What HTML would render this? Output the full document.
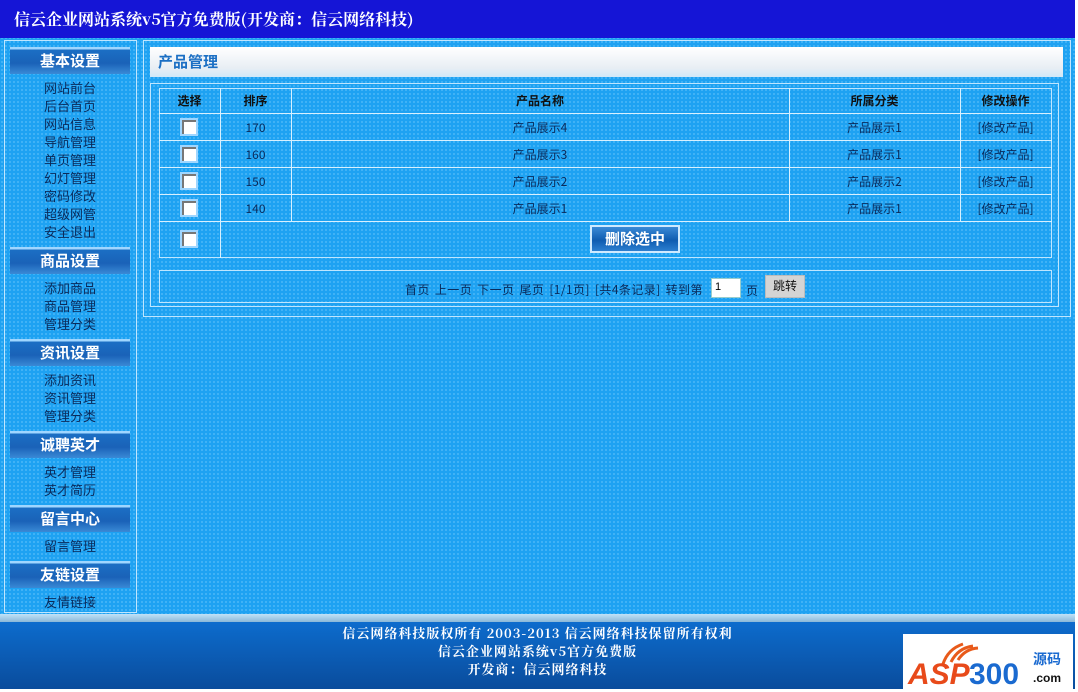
<!DOCTYPE html>
<html><head><meta charset="utf-8"><style>
*{margin:0;padding:0;box-sizing:border-box}
body{width:1078px;height:689px;overflow:hidden;background:#fff;position:relative;font-family:"Liberation Sans","SimSun","Noto Sans CJK SC",sans-serif;font-size:12px;color:#0a2a5a}
.bg{position:absolute;left:0;top:0;width:1075px;height:689px;background:#1ea2f2;background-image:radial-gradient(circle,#6cc6fa 0.6px,transparent 0.9px);background-size:4px 4px}
.hdr{position:absolute;left:0;top:0;width:1075px;height:38px;background:#1515d6;color:#fff;font:bold 16px "Noto Serif CJK SC","Noto Sans CJK SC",serif;line-height:38px;padding-left:14px;letter-spacing:0}
.box{position:absolute;border:1px solid #bfe6ff}
.sh{position:absolute;left:10px;width:120px;height:27px;background:linear-gradient(180deg,#9fd6ff 0,#9fd6ff 2px,#1b6fc4 3px,#1a62b8 60%,#3a8ad6 100%);color:#fff;font:bold 15px "Noto Sans CJK SC",sans-serif;text-align:center;line-height:27px}
.it{position:absolute;left:0;width:140px;text-align:center;font:13px "Noto Sans CJK SC",sans-serif;color:#0a2a5a;line-height:18px}
.title{position:absolute;left:150px;top:47px;width:913px;height:30px;background:linear-gradient(180deg,#fff,#e8eef4 70%,#cfe8f8);font:bold 15px "Noto Sans CJK SC",sans-serif;color:#1b6fc4;line-height:30px;padding-left:8px}
.l{position:absolute;background:#d8f0ff}
.t{position:absolute;text-align:center;font:12px "Noto Sans CJK SC",sans-serif;color:#0a2a5a}
.th{font-weight:bold;color:#111}
.cb{position:absolute;left:180px;width:18px;height:18px;border:2px solid #9fd6ff;background:#fff;box-shadow:inset 2px 2px 0 #777}
.ft{position:absolute;left:0;top:622px;width:1075px;height:67px;background:linear-gradient(180deg,#0d6ccd,#0a4c9c);color:#fff;font:bold 13px "Noto Serif CJK SC","Noto Sans CJK SC",serif;text-align:center;line-height:18px;padding-top:2px;letter-spacing:1px}
</style></head><body>
<div class="bg"></div>
<div class="hdr">信云企业网站系统v5官方免费版(开发商：信云网络科技)</div>

<div class="box" style="left:4px;top:40px;width:133px;height:573px"></div>
<div class="sh" style="top:47px">基本设置</div>
<div class="it" style="top:79px">网站前台<br>后台首页<br>网站信息<br>导航管理<br>单页管理<br>幻灯管理<br>密码修改<br>超级网管<br>安全退出</div>
<div class="sh" style="top:247px">商品设置</div>
<div class="it" style="top:279px">添加商品<br>商品管理<br>管理分类</div>
<div class="sh" style="top:339px">资讯设置</div>
<div class="it" style="top:371px">添加资讯<br>资讯管理<br>管理分类</div>
<div class="sh" style="top:431px">诚聘英才</div>
<div class="it" style="top:463px">英才管理<br>英才简历</div>
<div class="sh" style="top:505px">留言中心</div>
<div class="it" style="top:537px">留言管理</div>
<div class="sh" style="top:561px">友链设置</div>
<div class="it" style="top:593px">友情链接</div>

<div class="box" style="left:143px;top:40px;width:928px;height:277px"></div>
<div class="title">产品管理</div>
<div class="box" style="left:150px;top:83px;width:909px;height:224px"></div>
<div class="box" style="left:159px;top:88px;width:893px;height:170px"></div>
<div class="l" style="left:159px;top:113px;width:893px;height:1px"></div>
<div class="l" style="left:159px;top:140px;width:893px;height:1px"></div>
<div class="l" style="left:159px;top:167px;width:893px;height:1px"></div>
<div class="l" style="left:159px;top:194px;width:893px;height:1px"></div>
<div class="l" style="left:159px;top:221px;width:893px;height:1px"></div>
<div class="l" style="left:220px;top:88px;width:1px;height:170px"></div>
<div class="l" style="left:291px;top:88px;width:1px;height:133px"></div>
<div class="l" style="left:789px;top:88px;width:1px;height:133px"></div>
<div class="l" style="left:960px;top:88px;width:1px;height:133px"></div>

<div class="t th" style="left:159px;top:92px;width:61px">选择</div>
<div class="t th" style="left:220px;top:92px;width:71px">排序</div>
<div class="t th" style="left:291px;top:92px;width:498px">产品名称</div>
<div class="t th" style="left:789px;top:92px;width:171px">所属分类</div>
<div class="t th" style="left:960px;top:92px;width:91px">修改操作</div>

<div class="cb" style="top:118px"></div><div class="t" style="left:220px;top:119px;width:71px">170</div><div class="t" style="left:291px;top:119px;width:498px">产品展示4</div><div class="t" style="left:789px;top:119px;width:171px">产品展示1</div><div class="t" style="left:960px;top:119px;width:91px">[修改产品]</div>
<div class="cb" style="top:145px"></div><div class="t" style="left:220px;top:146px;width:71px">160</div><div class="t" style="left:291px;top:146px;width:498px">产品展示3</div><div class="t" style="left:789px;top:146px;width:171px">产品展示1</div><div class="t" style="left:960px;top:146px;width:91px">[修改产品]</div>
<div class="cb" style="top:172px"></div><div class="t" style="left:220px;top:173px;width:71px">150</div><div class="t" style="left:291px;top:173px;width:498px">产品展示2</div><div class="t" style="left:789px;top:173px;width:171px">产品展示2</div><div class="t" style="left:960px;top:173px;width:91px">[修改产品]</div>
<div class="cb" style="top:199px"></div><div class="t" style="left:220px;top:200px;width:71px">140</div><div class="t" style="left:291px;top:200px;width:498px">产品展示1</div><div class="t" style="left:789px;top:200px;width:171px">产品展示1</div><div class="t" style="left:960px;top:200px;width:91px">[修改产品]</div>
<div class="cb" style="top:230px"></div>
<div style="position:absolute;left:590px;top:225px;width:90px;height:28px;border:2px solid #cfeaff;background:linear-gradient(180deg,#3a8ad6,#0f5cb0 55%,#2c7fd0);color:#fff;font:bold 15px 'Noto Sans CJK SC',sans-serif;text-align:center;line-height:24px">删除选中</div>

<div class="box" style="left:159px;top:270px;width:893px;height:33px"></div>
<div class="t" style="left:405px;top:281px;text-align:left;white-space:nowrap;letter-spacing:0.4px;word-spacing:2px">首页 上一页 下一页 尾页 [1/1页] [共4条记录] 转到第</div>
<div style="position:absolute;left:711px;top:278px;width:30px;height:20px;background:#fff;border:1px solid #9cc;font-size:11px;padding:2px 3px;color:#000">1</div>
<div class="t" style="left:746px;top:282px">页</div>
<div style="position:absolute;left:765px;top:275px;width:40px;height:23px;background:#d4d4d4;border:1px solid #bbb;font:12px 'Noto Sans CJK SC',sans-serif;text-align:center;line-height:20px;color:#111">跳转</div>

<div style="position:absolute;left:0;top:614px;width:1075px;height:8px;background:linear-gradient(180deg,#bfe2f8,#8ab8d8)"></div>
<div class="ft">信云网络科技版权所有 2003-2013 信云网络科技保留所有权利<br>信云企业网站系统v5官方免费版<br>开发商：信云网络科技</div>
<div style="position:absolute;left:903px;top:634px;width:170px;height:55px;background:#fff">
<svg width="170" height="55" viewBox="0 0 170 55">
<path d="M40 30 Q45 15 60 10 M48 28 Q55 14 70 12 M55 26 Q62 15 75 14" stroke="#e85a1a" stroke-width="3" fill="none"/>
<text x="5" y="50" font-family="Liberation Sans" font-weight="bold" font-style="italic" font-size="30" fill="#e84a1a">ASP</text>
<text x="66" y="50" font-family="Liberation Sans" font-weight="bold" font-size="30" fill="#1a6ad0">300</text>
<text x="130" y="30" font-family="Noto Sans CJK SC" font-weight="bold" font-size="14" fill="#1a6ad0">源码</text>
<text x="130" y="48" font-family="Liberation Sans" font-weight="bold" font-size="12" fill="#111">.com</text>
</svg></div>
</body></html>
